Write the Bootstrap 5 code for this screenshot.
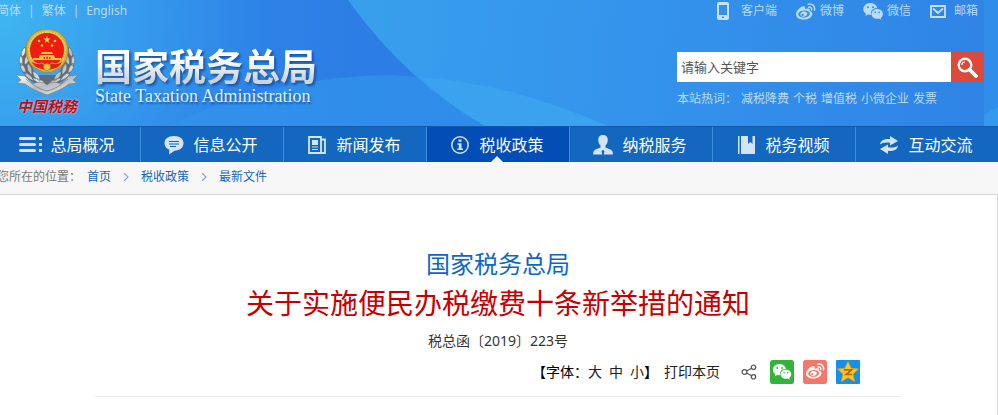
<!DOCTYPE html>
<html lang="zh-CN">
<head>
<meta charset="utf-8">
<meta name="viewport" content="width=device-width, initial-scale=1">
<title>国家税务总局</title>
<link rel="stylesheet" href="https://cdn.jsdelivr.net/npm/bootstrap@5.3.0/dist/css/bootstrap.min.css">
<style>
body{font-family:"Noto Sans","Noto Sans CJK SC",sans-serif;font-size:12px;line-height:18px;color:#333;background:#fff;overflow-x:hidden}
a{text-decoration:none}
svg{flex:none;display:block}
.site-head{background:#2f8bea;height:126px;isolation:isolate;padding-right:14px}
.head-art{z-index:-1;width:100%;height:100%}
.top-link,.top-sep,.hot-words,.hot-words a{color:#b9dcfa}
.lang-links{margin-left:-3px;gap:7px;padding-top:2px}
.brand{padding:9px 0 0 15px;gap:16px}
.emblem-name{color:#c40d12;font-size:15px;line-height:20px;font-weight:700;font-style:italic;text-shadow:0 0 2px #cfe6fb}
.brand-title{font-size:37px;line-height:38px;font-weight:700;background:linear-gradient(#fff 30%,#cdd3da 85%);-webkit-background-clip:text;background-clip:text;color:transparent;filter:drop-shadow(2px 2px 1px #1757a8)}
.brand-sub{font-family:"Liberation Serif",serif;font-size:18px;line-height:20px;color:#e3eefa;text-shadow:1px 2px 2px #1757a8}
.brand-words{padding-top:19px}
.head-side{width:308px}
.service-links{gap:19px;padding:2px 6px 0 0;height:20px}
.service-links a{gap:4px}
.service-links .wide-gap{gap:11px}
.search-form{margin-top:32px;padding-left:1px}
.search-form input{height:30px;padding:0 4px;font-size:13px;color:#555}
.search-form input::placeholder{color:#555;opacity:1}
.search-form button{width:33px;height:30px;background:#db4a3a}
.hot-words{padding:8px 0 0 1px;gap:4px}
.main-menu{background:#1467bf;border-top:1px solid #1059ae;margin-left:-2px;height:36px}
.main-menu a{flex:1 1 0;color:#fff;font-size:16px;line-height:24px;gap:7px;padding:0 4px 0 0;border-left:1px solid #3790dc;white-space:nowrap}
.main-menu a.current{background:#024db6}
.main-menu a.current::after{content:"";position:absolute;bottom:0;left:50%;margin-left:-7px;border:6px solid transparent;border-top:0;border-bottom-color:#f7f7f7}
.crumbs{background:#f7f7f7;border-bottom:1px solid #d6d6d6;height:33px;color:#777;padding-bottom:2px}
.crumbs ol{margin-left:-3px}
.crumbs .first-crumb{margin-left:6px}
.crumbs a{color:#1266bd}
.article{border-right:1px solid #d6d6d6;padding:50px 96px 18px 95px}
.issuer{font-size:24px;line-height:38px;color:#0f66c9}
.headline{font-size:28px;line-height:40px;color:#c80000}
.doc-no{font-size:14px;line-height:20px;padding-top:8px}
.tools{font-size:14px;line-height:20px;padding:9px 41px 12px 0;border-bottom:1px solid #ececec}
.tools button{font-size:14px;line-height:20px;color:#222}
.size-picks{gap:7px}
.print-btn{margin-left:6px}
.share{gap:9px;margin-left:21px}
</style>
<script src="https://cdn.jsdelivr.net/npm/bootstrap@5.3.0/dist/js/bootstrap.bundle.min.js"></script>
</head>
<body>
<svg width="0" height="0" class="position-absolute" aria-hidden="true">
  <defs>
    <symbol id="wechat" viewBox="0 0 20 17">
      <path fill="currentColor" fill-rule="evenodd" d="M7.500 0C3.400 0 .3 2.700.3 6c0 2 1 3.600 2.700 4.700L2.300 13l2.700-1.400c.8.200 1.600.4 2.500.4h.5C7.200 8 10 5.200 14.300 5.100 13.600 2.200 10.800 0 7.500 0zM5 3.200a1 1 0 1 1 0 2 1 1 0 0 1 0-2zm5 0a1 1 0 1 1 0 2 1 1 0 0 1 0-2z"/>
      <path fill="currentColor" fill-rule="evenodd" d="M14.200 6c-3.200 0-5.700 2.200-5.700 4.900s2.500 4.900 5.700 4.900c.7 0 1.300-.1 1.900-.3l2.100 1.200-.5-1.900c1.300-.9 2.200-2.300 2.200-3.900C19.900 8.200 17.400 6 14.200 6zm-1.900 2.600a.8.8 0 1 1 0 1.600.8.8 0 0 1 0-1.600zm3.800 0a.8.8 0 1 1 0 1.600.8.8 0 0 1 0-1.600z"/>
    </symbol>
    <symbol id="weibo" viewBox="0 0 20 17">
      <path fill="currentColor" fill-rule="evenodd" d="M8.300 3.400C9.500 4 9.300 5.200 9 6.200c2-.9 4.600-1.100 4.800.5.1.6-.2 1-.2 1.300 1.700.4 2.800 1.400 2.800 2.900 0 2.900-3.900 5.600-8.500 5.600C3.500 16.500 0 14.500 0 11.400 0 7.600 5.700 2.200 8.300 3.400zM7.700 7.500c-3.200.3-5.600 2-5.400 4.100.2 2 2.900 3.300 6.100 3s5.600-2.200 5.400-4.100c-.2-2.100-2.900-3.300-6.100-3z"/>
      <path fill="currentColor" fill-rule="evenodd" d="M7.800 8.500c-2 .2-3.700 1.500-3.500 3.200.2 1.400 1.800 2.300 3.700 2 2.100-.3 3.500-1.800 3.300-3.200-.2-1.400-1.700-2.200-3.500-2zM6.600 10.800a1.200 1.100 0 1 1 0 2.200 1.200 1.100 0 0 1 0-2.200z"/>
      <path d="M12.700 4.200c2-.4 3.200.9 2.900 2.700M12.300 1.200c4-.8 7 2 6.200 6" fill="none" stroke="currentColor" stroke-width="1.500" stroke-linecap="round"/>
    </symbol>
  </defs>
</svg>

<header class="site-head position-relative d-flex justify-content-between">
  <svg class="head-art position-absolute top-0 start-0" viewBox="0 0 998 126" preserveAspectRatio="none" aria-hidden="true">
    <defs>
      <radialGradient id="glow" gradientUnits="userSpaceOnUse" cx="0" cy="20" r="370">
        <stop offset="0" stop-color="#3fb6f1"/><stop offset=".35" stop-color="#369bed"/><stop offset=".72" stop-color="#2d82e7"/><stop offset="1" stop-color="#2c7de5"/>
      </radialGradient>
      <linearGradient id="sweep" gradientUnits="userSpaceOnUse" x1="370" y1="0" x2="984" y2="60">
        <stop offset="0" stop-color="#389fec"/><stop offset=".45" stop-color="#3493ec"/><stop offset="1" stop-color="#2f84e6"/>
      </linearGradient>
      <linearGradient id="hill" gradientUnits="userSpaceOnUse" x1="170" y1="0" x2="500" y2="0">
        <stop offset="0" stop-color="#3191eb"/><stop offset="1" stop-color="#2f8ce9"/>
      </linearGradient>
    </defs>
    <path fill="url(#glow)" d="M0 0h998v126H0z"/>
    <path fill="url(#hill)" d="M168 126Q270 77 390 75l30 2 70 49z"/>
    <path fill="url(#sweep)" d="M348 0Q405 80 485 126H984V0z"/>
    <path fill="#3aa2ee" d="M419 77Q510 83 608 126H485Q450 106 419 77z"/>
    <path fill="#308dea" d="M984 0h14v126h-14z"/>
    <path fill="#3799ee" d="M984 115l14-8v19h-14z"/>
  </svg>

  <div>
    <nav class="lang-links d-flex" aria-label="语言">
      <a class="top-link" href="#">简体</a><span class="top-sep">|</span>
      <a class="top-link" href="#">繁体</a><span class="top-sep">|</span>
      <a class="top-link" href="#">English</a>
    </nav>
    <div class="brand d-flex align-items-start">
      <div class="text-center">
        <svg width="64" height="67" viewBox="0 0 64 67" role="img" aria-label="税徽">
          <defs>
            <linearGradient id="silver" x1="0" y1="0" x2="1" y2="1"><stop offset="0" stop-color="#fff"/><stop offset=".5" stop-color="#b9bcc0"/><stop offset="1" stop-color="#f2f2f2"/></linearGradient>
          </defs>
          <path d="M11 18C2 28 2 45 20 54l12 5 12-5C62 45 62 28 53 18L44 46H20z" fill="#626c77"/>
          <g fill="url(#silver)" stroke="#515a64" stroke-width=".5">
            <path d="M10 18q-5 5-3 10 5-4 3-10zM6 26q-4 6 1 11 2-6-1-11zM13 25q-5 5-3 11 6-4 3-11zM6 34q-2 7 5 11 0-7-5-11zM13 34q-3 7 4 12 1-7-4-12zM9 43q1 6 10 9-3-7-10-9zM18 42q-1 6 7 10 0-7-7-10zM17 49q4 6 13 5-5-5-13-5z"/>
            <path d="M54 18q5 5 3 10-5-4-3-10zM58 26q4 6-1 11-2-6 1-11zM51 25q5 5 3 11-6-4-3-11zM58 34q2 7-5 11 0-7 5-11zM51 34q3 7-4 12-1-7 4-12zM55 43q-1 6-10 9 3-7 10-9zM46 42q1 6-7 10 0-7 7-10zM47 49q-4 6-13 5 5-5 13-5z"/>
          </g>
          <path d="M1 46l9 1 8 8c6-3 11-2 14 1 3-3 8-4 14-1l8-8 9-1-5 5 4 3-8 1C48 60 40 63 32 66 24 63 16 60 10 55l-8-1 4-3z" fill="url(#silver)" stroke="#7b7f83" stroke-width=".7"/>
          <path d="M11 50q11 10 21 12 10-2 21-12" fill="none" stroke="#8a8e92" stroke-width="1"/>
          <path d="M32 0C20 0 11 9 11 21c0 9 4 16 11 19l5 3h10l5-3c7-3 11-10 11-19C53 9 44 0 32 0z" fill="#d5b13d" stroke="#a98523" stroke-width=".8"/>
          <path d="M32 3C21 3 14 11 14 21s5 16 12 18M32 3c11 0 18 8 18 18s-5 16-12 18" fill="none" stroke="#f0d667" stroke-width="1.500" stroke-dasharray="2 1"/>
          <circle cx="32" cy="21" r="17" fill="#ee1d12"/>
          <path d="M32 7l.9 2.600h2.700l-2.200 1.700.8 2.600-2.200-1.600-2.200 1.600.8-2.600-2.200-1.700h2.700z" fill="#ffe04a"/>
          <g fill="#ffd83d"><circle cx="24" cy="12" r="1.300"/><circle cx="40" cy="12" r="1.300"/><circle cx="27" cy="16.500" r="1.200"/><circle cx="37" cy="16.500" r="1.200"/></g>
          <path d="M27 23h10l1 2H26zM25 26h14l1 3h6v2H18v-2h6z" fill="#f7c83a"/>
          <path d="M28.500 28h1.500v2h-1.500zM31.300 27.500h1.500V30h-1.500zM34 28h1.500v2H34z" fill="#d2331a"/>
          <path d="M16 32q7 4 11 2l5 3 5-3q4 2 11-2-3 7-9 8l-7 2-7-2c-4-1-8-4-9-8z" fill="#dd2215" stroke="#e8bd37" stroke-width="1"/>
          <circle cx="32" cy="38" r="3.500" fill="#ecc33e" stroke="#a66e18" stroke-width=".6"/>
        </svg>
        <div class="emblem-name">中国税務</div>
      </div>
      <div class="brand-words">
        <div class="brand-title">国家税务总局</div>
        <div class="brand-sub">State Taxation Administration</div>
      </div>
    </div>
  </div>

  <div class="head-side">
    <nav class="service-links d-flex justify-content-end align-items-center text-nowrap" aria-label="服务">
      <a class="top-link wide-gap d-flex align-items-center" href="#">
        <svg width="13" height="18" viewBox="0 0 13 18" aria-hidden="true"><path fill="#c7e1fa" fill-rule="evenodd" d="M2 0h8q2 0 2 2v14q0 2-2 2H2q-2 0-2-2V2q0-2 2-2zm0 3v10h8V3zm3 11.500v1.500h2v-1.500z"/></svg>客户端</a>
      <a class="top-link d-flex align-items-center" href="#"><svg width="20" height="17" aria-hidden="true"><use href="#weibo"/></svg>微博</a>
      <a class="top-link d-flex align-items-center" href="#"><svg width="20" height="17" aria-hidden="true"><use href="#wechat"/></svg>微信</a>
      <a class="top-link d-flex align-items-center gap-2" href="#">
        <svg width="16" height="13" viewBox="0 0 16 13" aria-hidden="true"><path d="M1 1h14v11H1zM3 3.500l5 4.500 5-4.500" fill="none" stroke="#c7e1fa" stroke-width="1.800"/></svg>邮箱</a>
    </nav>
    <form class="search-form d-flex" role="search">
      <input class="flex-grow-1 border-0 rounded-0 bg-white" type="text" placeholder="请输入关键字" aria-label="请输入关键字">
      <button class="btn border-0 rounded-0 p-0 d-flex align-items-center justify-content-center" type="button" aria-label="搜索">
        <svg width="21" height="21" viewBox="0 0 21 21" aria-hidden="true"><circle cx="8" cy="8" r="6.300" fill="none" stroke="#fff" stroke-width="2.400"/><path d="M4.800 8q.2-2.800 3-3.200" fill="none" stroke="#fff" stroke-width="1.200"/><path d="M12.500 12.500l6.500 6.500" stroke="#fff" stroke-width="3.800" stroke-linecap="round"/></svg>
      </button>
    </form>
    <div class="hot-words d-flex text-nowrap"><span>本站热词：</span><a href="#">减税降费</a><a href="#">个税</a><a href="#">增值税</a><a href="#">小微企业</a><a href="#">发票</a></div>
  </div>
</header>

<nav class="main-menu d-flex" aria-label="主导航">
  <a class="d-flex align-items-center justify-content-center border-start-0" href="#">
    <svg width="24" height="20" viewBox="0 0 24 20" aria-hidden="true"><path d="M1.500 3.500h14M1.500 9.500h14M1.500 15.500h14" stroke="#d3e4f6" stroke-width="3" stroke-linecap="round"/><path d="M20 2h3v3h-3zM20 8h3v3h-3zM20 14h3v3h-3z" fill="#d3e4f6"/></svg>总局概况</a>
  <a class="d-flex align-items-center justify-content-center" href="#">
    <svg width="24" height="20" viewBox="0 0 24 20" aria-hidden="true"><path d="M12 1c6 0 9.500 3 9.500 7.300s-3.500 7.300-9 7.500L7 19.500l.3-4.800C4.200 13.500 2.500 11.300 2.500 8.300 2.500 4 6 1 12 1z" fill="#d3e4f6"/><path d="M7 6.500h10M7 9h10M8 11.500h6" stroke="#1467bf" stroke-width="1.200"/></svg>信息公开</a>
  <a class="d-flex align-items-center justify-content-center" href="#">
    <svg width="24" height="20" viewBox="0 0 24 20" aria-hidden="true"><path d="M4 2h12v16H4zM16 4.500h4V18h-5" fill="none" stroke="#d3e4f6" stroke-width="1.800"/><path d="M7 5h6v5H7z" fill="#d3e4f6"/><path d="M7 12h6M7 14.500h6" stroke="#d3e4f6" stroke-width="1.200"/></svg>新闻发布</a>
  <a class="current position-relative d-flex align-items-center justify-content-center" href="#" aria-current="page">
    <svg width="24" height="20" viewBox="0 0 24 20" aria-hidden="true"><circle cx="12" cy="10" r="8.200" fill="none" stroke="#d3e4f6" stroke-width="1.500"/><path d="M10.500 4.500h3v2.300h-3zM9.500 8.200h4v5.300H15V15H9.300v-1.500h1.500V9.700H9.500z" fill="#d3e4f6"/></svg>税收政策</a>
  <a class="d-flex align-items-center justify-content-center" href="#">
    <svg width="24" height="20" viewBox="0 0 24 20" aria-hidden="true"><path d="M12 0c3 0 4.800 2 4.800 4.800 0 2.700-1 4.500-2.300 5.700v2l5.500 2.300q2 1 2 4.700H12.800l.7-3.500-1.500-1-1.500 1 .7 3.500H2q0-3.700 2-4.700l5.500-2.300v-2C8.200 9.300 7.200 7.500 7.200 4.800 7.200 2 9 0 12 0z" fill="#d3e4f6"/></svg>纳税服务</a>
  <a class="d-flex align-items-center justify-content-center" href="#">
    <svg width="24" height="20" viewBox="0 0 24 20" aria-hidden="true"><path d="M4 1h1.500v18H4zM7 1h7v8l2.300-2L18.500 9V1H21v18H7z" fill="#d3e4f6"/></svg>税务视频</a>
  <a class="d-flex align-items-center justify-content-center" href="#">
    <svg width="24" height="20" viewBox="0 0 24 20" aria-hidden="true"><path id="swap" d="M3 9.500C3.500 5.500 7 3.700 13 4V1l8 5-8 4.500V7.800C8.500 7 5.500 7.500 3 9.500z" fill="#d3e4f6"/><use href="#swap" transform="rotate(180 12 10)"/></svg>互动交流</a>
</nav>

<nav class="crumbs d-flex align-items-center" aria-label="面包屑">
  <ol class="list-unstyled d-flex align-items-center mb-0">
    <li>您所在的位置：</li>
    <li class="first-crumb"><a href="#">首页</a></li>
    <li class="px-2 mx-1"><svg width="6" height="8" viewBox="0 0 6 8" aria-hidden="true"><path d="M1 0l4 4-4 4" fill="none" stroke="#86a5d8" stroke-width="1.200"/></svg></li>
    <li><a href="#">税收政策</a></li>
    <li class="px-2 mx-1"><svg width="6" height="8" viewBox="0 0 6 8" aria-hidden="true"><path d="M1 0l4 4-4 4" fill="none" stroke="#86a5d8" stroke-width="1.200"/></svg></li>
    <li><a href="#">最新文件</a></li>
  </ol>
</nav>

<main class="article">
  <h1 class="text-center fw-normal mb-0">
    <span class="issuer d-block">国家税务总局</span>
    <span class="headline d-block">关于实施便民办税缴费十条新举措的通知</span>
  </h1>
  <p class="doc-no text-center mb-0">税总函〔2019〕223号</p>
  <div class="tools d-flex align-items-center justify-content-end text-nowrap">
    <span class="text-black">【字体：</span>
    <div class="size-picks d-flex">
      <button class="btn border-0 p-0" type="button">大</button>
      <button class="btn border-0 p-0" type="button">中</button>
      <button class="btn border-0 p-0" type="button">小</button>
    </div>
    <span class="text-black">】</span>
    <button class="print-btn btn border-0 p-0" type="button">打印本页</button>
    <div class="share d-flex align-items-center">
      <a class="me-1" href="#" aria-label="分享"><svg width="16" height="16" viewBox="0 0 16 16"><g fill="none" stroke="#555" stroke-width="1.200"><circle cx="3.500" cy="8" r="2.400"/><circle cx="12.500" cy="3.200" r="2.200"/><circle cx="12.500" cy="12.800" r="2.200"/><path d="M5.700 7l4.800-2.700M5.700 9l4.800 2.700"/></g></svg></a>
      <a class="text-white" href="#" aria-label="微信"><svg width="24" height="24" viewBox="0 0 24 24"><rect width="24" height="24" rx="2.500" fill="#30b53a"/><use href="#wechat" x="2.500" y="4" width="19" height="16"/></svg></a>
      <a class="text-white" href="#" aria-label="微博"><svg width="24" height="24" viewBox="0 0 24 24"><rect width="24" height="24" rx="2.500" fill="#f5766b"/><use href="#weibo" x="3" y="3" width="19" height="16"/></svg></a>
      <a href="#" aria-label="QQ空间"><svg width="24" height="24" viewBox="0 0 24 24"><rect width="24" height="24" rx="1" fill="#1291ea"/><path d="M12 1.500l3.100 6.800 7.400.8-5.500 5 1.600 7.400-6.600-3.800-6.600 3.800L7 14.100l-5.500-5 7.400-.8z" fill="#ffc61c" stroke="#f29a0c" stroke-width=".8"/><path d="M7.800 9.800h7.700l-5.300 4.700h6" fill="none" stroke="#b3640d" stroke-width="1.700"/></svg></a>
    </div>
  </div>
</main>
</body>
</html>
